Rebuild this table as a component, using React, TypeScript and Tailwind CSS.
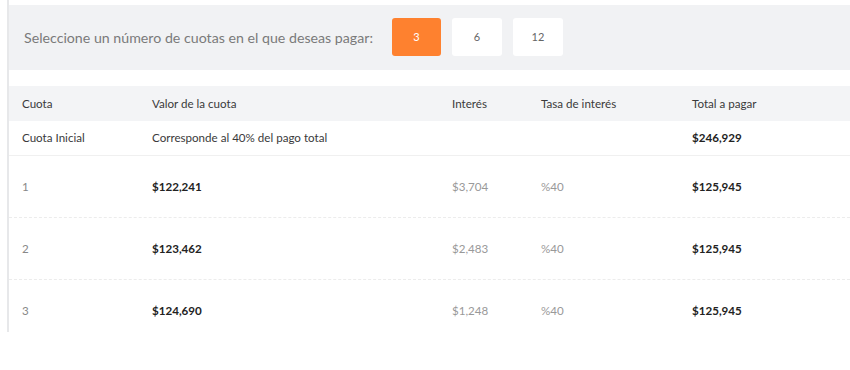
import React, { useState } from "react";

interface ICuota {
  numero: string;
  valor: string;
  interes: string;
  tasa: string;
  total: string;
}

const cuotas: ICuota[] = [
  { numero: "1", valor: "$122,241", interes: "$3,704", tasa: "%40", total: "$125,945" },
  { numero: "2", valor: "$123,462", interes: "$2,483", tasa: "%40", total: "$125,945" },
  { numero: "3", valor: "$124,690", interes: "$1,248", tasa: "%40", total: "$125,945" },
];

const opciones = [3, 6, 12];

const cols = "grid grid-cols-[130px_300px_89px_151px_1fr] items-center pl-[13px]";

export default function App() {
  const [selected, setSelected] = useState(3);

  return (
    <div className="w-[850px] h-[370px] bg-white font-['Lato','Open_Sans',sans-serif]">
      <div className="ml-[7px] h-[332px] overflow-hidden border-l-2 border-[#e7e8ea]">
        <div className="mt-[5px] h-[65px] bg-[#f1f2f4] flex items-center pl-[15px]">
          <span className="text-[14.2px] text-[#7a7a7a]">
            Seleccione un número de cuotas en el que deseas pagar:
          </span>
          <div className="flex gap-[11px] ml-[19px] mt-[-1px]">
            {opciones.map((n) => (
              <button
                key={n}
                onClick={() => setSelected(n)}
                className={
                  selected === n
                    ? "w-[49px] h-[38px] rounded-[3px] bg-[#fe812f] text-white text-[11px]"
                    : "w-[50px] h-[38px] rounded-[3px] bg-white text-[#666] text-[11px]"
                }
              >
                {n}
              </button>
            ))}
          </div>
        </div>

        <div className="mt-[16px] text-[11.6px]">
          <div className={`${cols} h-[35px] bg-[#f3f4f6] text-[#3a3a3a]`}>
            <span>Cuota</span>
            <span>Valor de la cuota</span>
            <span>Interés</span>
            <span>Tasa de interés</span>
            <span>Total a pagar</span>
          </div>
          <div className={`${cols} h-[35px] border-b border-[#f0f0f0] text-[#3a3a3a]`}>
            <span>Cuota Inicial</span>
            <span>Corresponde al 40% del pago total</span>
            <span></span>
            <span></span>
            <span className="font-bold text-[#222]">$246,929</span>
          </div>
          {cuotas.map((c) => (
            <div
              key={c.numero}
              className={`${cols} h-[62px] border-b border-dashed border-[#ececec]`}
            >
              <span className="text-[#888]">{c.numero}</span>
              <span className="font-bold text-[#222]">{c.valor}</span>
              <span className="text-[#999]">{c.interes}</span>
              <span className="text-[#999]">{c.tasa}</span>
              <span className="font-bold text-[#222]">{c.total}</span>
            </div>
          ))}
        </div>
      </div>
    </div>
  );
}
